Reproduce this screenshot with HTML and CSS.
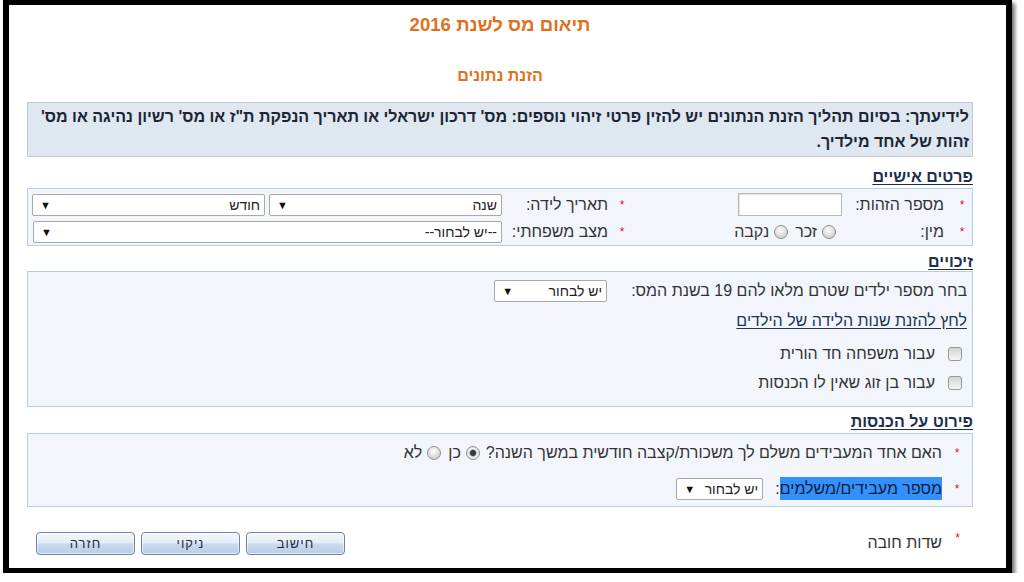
FILE: index.html
```html
<!DOCTYPE html>
<html lang="he">
<head>
<meta charset="utf-8">
<title>תיאום מס לשנת 2016</title>
<link rel="stylesheet" href="styles.css">
</head>
<body>
<div class="frame">
  <div class="page" dir="rtl">
    <h1 class="title">תיאום מס לשנת 2016</h1>
    <h2 class="subtitle">הזנת נתונים</h2>

    <div class="info">לידיעתך: בסיום תהליך הזנת הנתונים יש להזין פרטי זיהוי נוספים: מס' דרכון ישראלי או תאריך הנפקת ת"ז או מס' רשיון נהיגה או מס'<br>זהות של אחד מילדיך.</div>

    <h3 class="section s1">פרטים אישיים</h3>
    <div class="box personal">
      <span class="star">*</span>
      <span class="lbl">מספר הזהות:</span>
      <span class="field f1"><span class="textbox"></span></span>
      <span class="star">*</span>
      <span class="lbl lbl2">תאריך לידה:</span>
      <span class="field f2">
        <span class="select wide"><span class="opt">שנה</span><span class="arr">▼</span></span>
        <span class="select wide"><span class="opt">חודש</span><span class="arr">▼</span></span>
      </span>

      <span class="star">*</span>
      <span class="lbl">מין:</span>
      <span class="field f1 radios">
        <span class="radio"></span><span class="rtext">זכר</span>
        <span class="radio"></span><span class="rtext">נקבה</span>
      </span>
      <span class="star">*</span>
      <span class="lbl lbl2">מצב משפחתי:</span>
      <span class="field f2">
        <span class="select full"><span class="opt">--יש לבחור--</span><span class="arr">▼</span></span>
      </span>
    </div>

    <h3 class="section s2">זיכויים</h3>
    <div class="box credits">
      <div class="row r-kids">
        <span class="txt">בחר מספר ילדים שטרם מלאו להם 19 בשנת המס:</span>
        <span class="select kids"><span class="opt">יש לבחור</span><span class="arr">▼</span></span>
      </div>
      <div class="row r-link"><a class="link">לחץ להזנת שנות הלידה של הילדים</a></div>
      <div class="row r-check"><span class="check"></span><span class="txt">עבור משפחה חד הורית</span></div>
      <div class="row r-check"><span class="check"></span><span class="txt">עבור בן זוג שאין לו הכנסות</span></div>
    </div>

    <h3 class="section s3">פירוט על הכנסות</h3>
    <div class="box income">
      <div class="row r-q">
        <span class="star">*</span>
        <span class="txt">האם אחד המעבידים משלם לך משכורת/קצבה חודשית במשך השנה?</span>
        <span class="radio checked"></span><span class="rtext">כן</span>
        <span class="radio"></span><span class="rtext">לא</span>
      </div>
      <div class="row r-emp">
        <span class="star">*</span>
        <span class="txt"><span class="sel">מספר מעבידים/משלמים</span>:</span>
        <span class="select emp"><span class="opt">יש לבחור</span><span class="arr">▼</span></span>
      </div>
    </div>

    <div class="footer">
      <div class="req"><span class="star up">*</span><span class="txt">שדות חובה</span></div>
      <div class="buttons">
        <button class="btn">חישוב</button>
        <button class="btn">ניקוי</button>
        <button class="btn">חזרה</button>
      </div>
    </div>
  </div>
</div>
</body>
</html>
```
FILE: styles.css
```css
html, body {
  margin: 0;
  padding: 0;
  background: #ffffff;
}

body {
  font-family: "Liberation Sans", Arial, "DejaVu Sans", sans-serif;
  color: #333333;
}

.frame {
  box-sizing: border-box;
  width: 1009px;
  height: 573px;
  margin: 0 auto 0 3px;
  border-style: solid;
  border-color: #000;
  border-width: 5px 6px 5px 6px;
  background: #fff;
  box-shadow: 3px 3px 4px rgba(0, 0, 0, 0.55);
}

.page {
  direction: rtl;
  width: 946px;
  margin: 0 auto 0 18px;
  padding-top: 8px;
}

.title {
  margin: 0;
  text-align: center;
  font-size: 18.6px;
  line-height: 24px;
  font-weight: bold;
  color: #e0701c;
}

.subtitle {
  margin: 29px 0 0;
  text-align: center;
  font-size: 16px;
  line-height: 20px;
  font-weight: bold;
  color: #e0701c;
}

.info {
  margin-top: 16px;
  box-sizing: border-box;
  height: 55px;
  padding: 1px 3px 0;
  background: #dfe7f0;
  border: 1px solid #bccad9;
  font-size: 16px;
  line-height: 25px;
  font-weight: bold;
  color: #1c2533;
  white-space: nowrap;
}

.section {
  margin: 0;
  font-size: 16px;
  line-height: 18px;
  font-weight: bold;
  color: #1d2f4c;
  text-decoration: underline;
  text-underline-offset: 2px;
}
.s1 { margin-top: 11px; margin-bottom: 2px; }
.s2 { margin-top: 7px; margin-bottom: 0; }
.s3 { margin-top: 6px; margin-bottom: 2px; }

.box {
  box-sizing: border-box;
  background: #f2f6fc;
  border: 1px solid #b9cde3;
  font-size: 16px;
}

/* personal details grid */
.personal {
  height: 58px;
  padding-top: 1px;
  display: grid;
  grid-template-columns: 20px 108px 214px 16px 106px 1fr;
  grid-template-rows: 29px 26px;
  align-items: center;
}

.star {
  color: #e0141c;
  font-size: 12px;
  text-align: center;
}

.lbl {
  padding-right: 8px;
  white-space: nowrap;
}
.lbl2 {
  padding-right: 6px;
}

.field {
  display: flex;
  align-items: center;
}
.f1 {
  padding-right: 2px;
}
.f2 {
  padding-right: 6px;
  padding-left: 5px;
  gap: 4px;
}

.textbox {
  box-sizing: border-box;
  width: 104px;
  height: 23px;
  background: #fff;
  border: 1px solid #b8b8b8;
  box-shadow: inset 1px 1px 1px #e4e4e4;
}

.select {
  box-sizing: border-box;
  display: flex;
  align-items: center;
  justify-content: space-between;
  height: 22px;
  padding: 0 4px 0 7px;
  background: #fff;
  border: 1px solid #a9a9a9;
  border-radius: 2px;
  font-size: 14px;
  color: #222;
}
.select .arr {
  font-size: 11px;
  color: #111;
}
.select.wide { width: 233px; }
.select.full { width: 469px; }
.select.kids { width: 113px; margin-right: 24px; }
.select.emp { width: 87px; margin-right: 6px; }

.radios {
  padding-right: 8px;
}

.radio {
  box-sizing: border-box;
  display: inline-block;
  width: 14px;
  height: 14px;
  border-radius: 50%;
  border: 1px solid #8e8e8e;
  background: radial-gradient(circle at 45% 35%, #ffffff 0, #e3e3e3 45%, #c2c2c2 100%);
  flex: none;
}
.radio.checked {
  background: radial-gradient(circle, #3a3a3a 0 2.5px, #8e8e8e 3.2px, #f2f2f2 4px, #cfcfcf 100%);
}
.rtext {
  margin: 0 5px 0 7px;
}

.row {
  display: flex;
  align-items: center;
  white-space: nowrap;
}

.credits {
  height: 136px;
  padding: 5px 5px 0 0;
}
.r-kids { height: 28px; }
.r-link { height: 30px; padding-top: 2px; box-sizing: border-box; }
.link {
  color: #233450;
  text-decoration: underline;
  text-underline-offset: 2px;
}
.r-check {
  height: 29px;
  padding-right: 5px;
}
.r-link + .r-check { margin-top: 4px; }

.check {
  box-sizing: border-box;
  display: inline-block;
  width: 14px;
  height: 14px;
  border: 1px solid #979797;
  border-radius: 3px;
  background: linear-gradient(#d3d3d3, #f6f6f6);
  margin-left: 13px;
  flex: none;
}

.income {
  height: 74px;
  padding-top: 5px;
}
.income .star {
  width: 30px;
  flex: none;
}
.income .txt {
  margin-left: 6px;
}
.r-q { height: 28px; }
.r-emp { height: 28px; margin-top: 8px; }

.sel {
  background: #3390ff;
  color: #0d1d36;
  padding: 3px 0;
}

.footer {
  margin-top: 22px;
  display: flex;
  justify-content: space-between;
  align-items: center;
  height: 28px;
  font-size: 16px;
}
.req {
  display: flex;
  align-items: center;
}
.req .star {
  width: 31px;
  position: relative;
  top: -5px;
}
.buttons {
  display: flex;
  gap: 6px;
  margin-left: 9px;
}
.btn {
  box-sizing: border-box;
  width: 99px;
  height: 23px;
  padding: 0;
  border: 1px solid #6e84a6;
  border-radius: 4px;
  background: linear-gradient(#f5f8fc 0%, #e3ecf7 45%, #c9d9ee 55%, #b8cde7 100%);
  box-shadow: inset 0 0 0 1px rgba(255, 255, 255, 0.6);
  font-family: "Liberation Sans", Arial, sans-serif;
  font-size: 13px;
  font-weight: normal;
  letter-spacing: 1px;
  color: #1f2b3d;
}
```
